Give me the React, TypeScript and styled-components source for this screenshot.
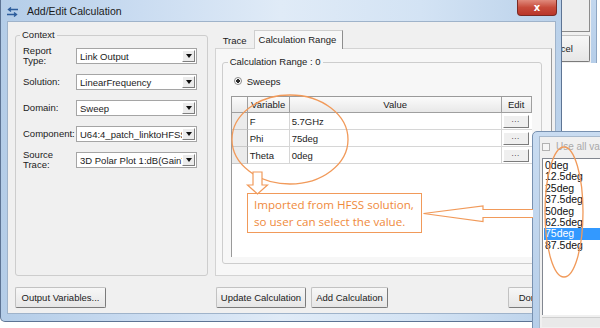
import styled, { createGlobalStyle } from "styled-components"

const GlobalStyle = createGlobalStyle`
  html, body {
    margin: 0;
    padding: 0;
    background: #fff;
  }
  body {
    font-family: "Liberation Sans", Arial, sans-serif;
    font-size: 9.5px;
    color: #1b1b1b;
  }
`

const fields = [
  { label: "Report Type:", value: "Link Output" },
  { label: "Solution:", value: "LinearFrequency" },
  { label: "Domain:", value: "Sweep" },
  { label: "Component:", value: "U64:4_patch_linktoHFSS" },
  { label: "Source Trace:", value: "3D Polar Plot 1:dB(GainTotal)" },
]

const rows = [
  { name: "F", value: "5.7GHz" },
  { name: "Phi", value: "75deg" },
  { name: "Theta", value: "0deg" },
]

const phiValues = ["0deg", "12.5deg", "25deg", "37.5deg", "50deg", "62.5deg", "75deg", "87.5deg"]

const ORANGE = "#f19a5a"

export const App = () => {
  return (
    <Desktop>
      <GlobalStyle />

      <BackWindow>
        <BackClient>
          <BackBox />
          <PushButton $w={64} $h={27}>Cancel</PushButton>
        </BackClient>
      </BackWindow>

      <MainWindow>
        <TitleBar>
          <AppIcon width="13" height="10" viewBox="0 0 13 10">
            <path d="M12 2.5H3M5 0.5L2.5 2.5L5 4.5" fill="none" stroke="#2d5d9c" strokeWidth="1.4" />
            <path d="M1 7.5H10M8 5.5L10.5 7.5L8 9.5" fill="none" stroke="#2d5d9c" strokeWidth="1.4" />
          </AppIcon>
          <Title>Add/Edit Calculation</Title>
          <CloseButton>x</CloseButton>
        </TitleBar>

        <Client>
          <Body>
            <ContextGroup>
              <Legend>Context</Legend>
              {fields.map((f) => (
                <FieldRow key={f.label}>
                  <FieldLabel>{f.label}</FieldLabel>
                  <Select>
                    <SelectText>{f.value}</SelectText>
                    <SelectArrow />
                  </Select>
                </FieldRow>
              ))}
            </ContextGroup>

            <TabControl>
              <TabStrip>
                <Tab>Trace</Tab>
                <Tab $active>Calculation Range</Tab>
              </TabStrip>
              <TabPanel>
                <RangeGroup>
                  <Legend>Calculation Range : 0</Legend>
                  <RadioRow>
                    <Radio />
                    <span>Sweeps</span>
                  </RadioRow>
                  <Grid>
                    <GridRow>
                      <HeaderCell />
                      <HeaderCell>Variable</HeaderCell>
                      <HeaderCell>Value</HeaderCell>
                      <HeaderCell>Edit</HeaderCell>
                    </GridRow>
                    {rows.map((r) => (
                      <GridRow key={r.name}>
                        <RowHeader />
                        <Cell>{r.name}</Cell>
                        <Cell>{r.value}</Cell>
                        <EditCell>
                          <DotsButton>...</DotsButton>
                        </EditCell>
                      </GridRow>
                    ))}
                  </Grid>
                </RangeGroup>
              </TabPanel>
            </TabControl>
          </Body>

          <ButtonRow>
            <div>
              <PushButton $w={91}>Output Variables...</PushButton>
            </div>
            <RightButtons>
              <PushButton $w={90}>Update Calculation</PushButton>
              <PushButton $w={77}>Add Calculation</PushButton>
              <Spacer />
              <PushButton $w={44}>Done</PushButton>
            </RightButtons>
          </ButtonRow>
        </Client>
      </MainWindow>

      <PopupWindow>
        <PopupClient>
          <CheckRow>
            <CheckBox />
            <span>Use all values</span>
          </CheckRow>
          <ListBox>
            {phiValues.map((v) => (
              <ListItem key={v} $selected={v === "75deg"}>
                {v}
              </ListItem>
            ))}
          </ListBox>
          <HScroll />
        </PopupClient>
      </PopupWindow>

      <Callout>
        Imported from HFSS solution,
        <br />
        so user can select the value.
      </Callout>

      <Overlay width="600" height="328" viewBox="0 0 600 328">
        <ellipse cx="290" cy="139.5" rx="58" ry="44.5" fill="none" stroke={ORANGE} strokeWidth="1.3" />
        <path d="M253 172V185H247.5L257.5 194L267.5 185H262V172Z" fill="#fff" stroke={ORANGE} strokeWidth="1.2" />
        <path d="M533 209.5H483V206L423.5 213.5L483 221.5V217.5H533" fill="#fff" stroke={ORANGE} strokeWidth="1.2" />
        <ellipse cx="564" cy="212" rx="19" ry="65" fill="none" stroke={ORANGE} strokeWidth="1.3" />
      </Overlay>
    </Desktop>
  )
}

const Desktop = styled.div`
  position: relative;
  width: 600px;
  height: 328px;
  overflow: hidden;
  background: #fff;
`

const BackWindow = styled.div`
  position: absolute;
  left: 420px;
  top: -30px;
  width: 177px;
  height: 93px;
  box-sizing: border-box;
  display: flex;
  padding-right: 5px;
  background: linear-gradient(#c9dcf1, #b6cee9);
  border-right: 1px solid #8ea6c2;
`

const BackClient = styled.div`
  flex: 1;
  display: flex;
  flex-direction: column;
  align-items: flex-end;
  gap: 3px;
  padding-right: 1px;
  background: #f0f0f0;
`

const BackBox = styled.div`
  width: 60px;
  height: 62px;
  box-sizing: border-box;
  border-right: 1px solid #8c8c8c;
  border-bottom: 1px solid #8c8c8c;
  background: #eeeeee;
`

const MainWindow = styled.div`
  position: absolute;
  left: 0;
  top: 0;
  z-index: 2;
  width: 562px;
  height: 322px;
  box-sizing: border-box;
  display: flex;
  flex-direction: column;
  border: 1px solid #5d7494;
  border-top: none;
  border-radius: 0 0 5px 5px;
  background: linear-gradient(90deg, #b4cde8 0%, #cadcf1 25%, #e0ebf7 50%, #d3e3f4 75%, #bad1ea 100%);
`

const TitleBar = styled.div`
  height: 23px;
  display: flex;
  align-items: center;
  gap: 8px;
  padding-left: 5px;
`

const AppIcon = styled.svg`
  flex-shrink: 0;
  margin-top: 1px;
`

const Title = styled.span`
  font-size: 10.5px;
  color: #1a1a1a;
`

const CloseButton = styled.div`
  align-self: flex-start;
  margin-left: auto;
  margin-right: 4px;
  width: 40px;
  height: 16px;
  box-sizing: border-box;
  display: flex;
  align-items: center;
  justify-content: center;
  border: 1px solid #7a2a24;
  border-top: none;
  border-radius: 0 0 4px 4px;
  background: linear-gradient(#e08a7c, #c74b3b 50%, #b9362a);
  color: #fff;
  font-family: "DejaVu Sans", sans-serif;
  font-size: 10px;
  font-weight: bold;
  line-height: 1;
`

const Client = styled.div`
  flex: 1;
  margin: 0 6px 8px 7px;
  display: flex;
  flex-direction: column;
  box-sizing: border-box;
  padding: 7px 3px 5px 7px;
  background: #f0f0f0;
  box-shadow: 0 0 0 1px #9fb3ca;
`

const Body = styled.div`
  height: 247px;
  display: flex;
  gap: 7px;
`

const Legend = styled.legend`
  padding: 0 2px;
  margin-left: -3px;
  line-height: 12px;
`

const ContextGroup = styled.fieldset`
  width: 193px;
  height: 247px;
  box-sizing: border-box;
  margin: 0;
  padding: 2px 9px 0 7px;
  border: 1px solid #cdcdcd;
  border-radius: 3px;
  min-inline-size: 0;
`

const FieldRow = styled.div`
  height: 26px;
  display: flex;
  align-items: center;
`

const FieldLabel = styled.div`
  width: 53px;
  line-height: 10px;
`

const Select = styled.div`
  width: 121px;
  height: 16px;
  box-sizing: border-box;
  display: flex;
  align-items: center;
  padding-left: 3px;
  background: #fff;
  border: 1px solid #a5a5a5;
`

const SelectText = styled.span`
  flex: 1;
  min-width: 0;
  overflow: hidden;
  white-space: nowrap;
`

const SelectArrow = styled.span`
  width: 13px;
  height: 12px;
  margin-right: 1px;
  flex-shrink: 0;
  box-sizing: border-box;
  display: flex;
  align-items: center;
  justify-content: center;
  background: #ececec;
  border: 1px solid;
  border-color: #fff #7e7e7e #7e7e7e #fff;

  &::after {
    content: "";
    border-left: 3px solid transparent;
    border-right: 3px solid transparent;
    border-top: 4px solid #111;
  }
`

const TabControl = styled.div`
  width: 338px;
  display: flex;
  flex-direction: column;
`

const TabStrip = styled.div`
  height: 19px;
  display: flex;
  align-items: flex-end;
  padding-left: 2px;
`

const Tab = styled.div<{ $active?: boolean }>`
  height: ${(p) => (p.$active ? "19px" : "16px")};
  box-sizing: border-box;
  display: flex;
  align-items: center;
  padding: ${(p) => (p.$active ? "0 6px 2px 4px" : "0 6px 0 5px")};
  margin-bottom: ${(p) => (p.$active ? "-1px" : "0")};
  background: ${(p) => (p.$active ? "#f7f7f7" : "transparent")};
  border: 1px solid ${(p) => (p.$active ? "#cfcfcf" : "transparent")};
  border-right-color: ${(p) => (p.$active ? "#8d8d8d" : "transparent")};
  border-bottom: none;
  position: relative;
  z-index: 1;
`

const TabPanel = styled.div`
  flex: 1;
  box-sizing: border-box;
  padding: 7px 9px 11px 6px;
  background: #f7f7f7;
  border: 1px solid #d3d3d3;
  border-right-color: #9a9a9a;
`

const RangeGroup = styled.fieldset`
  height: 100%;
  box-sizing: border-box;
  margin: 0;
  padding: 7px 8px 0 8px;
  border: 1px solid #cdcdcd;
  border-radius: 3px;
  min-inline-size: 0;
  display: flex;
  flex-direction: column;
  gap: 9px;
`

const RadioRow = styled.div`
  height: 12px;
  display: flex;
  align-items: center;
  gap: 5px;
  padding-left: 3px;
`

const Radio = styled.span`
  width: 8px;
  height: 8px;
  box-sizing: border-box;
  border-radius: 50%;
  border: 1px solid #8a8a8a;
  background: radial-gradient(circle, #2a2a2a 0 1.6px, #fff 2px);
`

const Grid = styled.div`
  width: 301px;
  height: 161px;
  box-sizing: border-box;
  background: #fff;
  border-left: 1px solid #9a9a9a;
  border-top: 1px solid #9a9a9a;
`

const GridRow = styled.div`
  display: grid;
  grid-template-columns: 16px 42px 212px 1fr;
`

const HeaderCell = styled.div`
  height: 16px;
  box-sizing: border-box;
  display: flex;
  align-items: center;
  justify-content: center;
  background: linear-gradient(#fbfbfb, #e8e8e8);
  border-right: 1px solid #9f9f9f;
  border-bottom: 1px solid #9f9f9f;
`

const RowHeader = styled.div`
  height: 17px;
  box-sizing: border-box;
  background: #ebebeb;
  border-right: 1px solid #9f9f9f;
  border-bottom: 1px solid #c9c9c9;
`

const Cell = styled.div`
  height: 17px;
  box-sizing: border-box;
  display: flex;
  align-items: center;
  padding-left: 2px;
  border-right: 1px solid #d6d6d6;
  border-bottom: 1px solid #d6d6d6;
`

const EditCell = styled(Cell)`
  padding-left: 1px;
  border-right: none;
`

const DotsButton = styled.div`
  width: 26px;
  height: 13px;
  box-sizing: border-box;
  display: flex;
  align-items: center;
  justify-content: center;
  padding-bottom: 3px;
  background: #efefef;
  border: 1px solid;
  border-color: #fff #7c7c7c #7c7c7c #fff;
  font-size: 8px;
  letter-spacing: 0.5px;
`

const ButtonRow = styled.div`
  margin-top: 11px;
  display: grid;
  grid-template-columns: 193px 1fr;
  gap: 8px;
`

const RightButtons = styled.div`
  display: flex;
  gap: 5px;
`

const Spacer = styled.div`
  flex: 1;
`

const PushButton = styled.div<{ $w: number; $h?: number }>`
  width: ${(p) => p.$w}px;
  height: ${(p) => p.$h ?? 21}px;
  box-sizing: border-box;
  display: flex;
  align-items: center;
  justify-content: center;
  white-space: nowrap;
  background: linear-gradient(#f7f7f7, #e6e6e6);
  border: 1px solid #c2c2c2;
  border-right-color: #7b7b7b;
  border-bottom-color: #7b7b7b;
  border-radius: 2px;
`

const PopupWindow = styled.div`
  position: absolute;
  left: 532px;
  top: 131px;
  z-index: 3;
  width: 80px;
  height: 210px;
  box-sizing: border-box;
  display: flex;
  padding: 5px 0 0 7px;
  background: linear-gradient(#c9dcf1, #b6cee9);
  border: 1px solid #7891b0;
  border-radius: 5px 0 0 0;
`

const PopupClient = styled.div`
  flex: 1;
  display: flex;
  flex-direction: column;
  padding: 5px 0 0 2px;
  background: #f0f0f0;
  box-shadow: 0 0 0 1px #a7b9cd;
`

const CheckRow = styled.div`
  height: 9px;
  display: flex;
  align-items: center;
  gap: 6px;
  color: #a9a9a9;
  font-size: 10px;
  white-space: nowrap;
`

const CheckBox = styled.span`
  width: 8px;
  height: 8px;
  flex-shrink: 0;
  box-sizing: border-box;
  border: 1px solid #b2b2b2;
  background: #f6f6f6;
`

const ListBox = styled.div`
  margin-top: 7px;
  height: 157px;
  box-sizing: border-box;
  padding: 1px 0 0 1px;
  background: #fff;
  border-left: 1px solid #828790;
  border-top: 1px solid #828790;
`

const ListItem = styled.div<{ $selected?: boolean }>`
  height: 11.4px;
  line-height: 11.4px;
  padding-left: 1px;
  font-size: 10.5px;
  color: ${(p) => (p.$selected ? "#fff" : "#111")};
  background: ${(p) => (p.$selected ? "#3399ff" : "transparent")};
`

const HScroll = styled.div`
  height: 9px;
  margin-top: 2px;
  background: #e9e9e9;
  border-top: 1px solid #cfcfcf;
`

const Callout = styled.div`
  position: absolute;
  left: 247px;
  top: 193px;
  z-index: 4;
  width: 175px;
  height: 40px;
  box-sizing: border-box;
  padding: 2px 0 0 6px;
  background: #fff;
  border: 1px solid ${ORANGE};
  color: #ef8a3c;
  font-family: "Open Sans", "Liberation Sans", sans-serif;
  font-size: 11.6px;
  line-height: 17px;
  white-space: nowrap;
`

const Overlay = styled.svg`
  position: absolute;
  left: 0;
  top: 0;
  z-index: 5;
  pointer-events: none;
`

export default App
